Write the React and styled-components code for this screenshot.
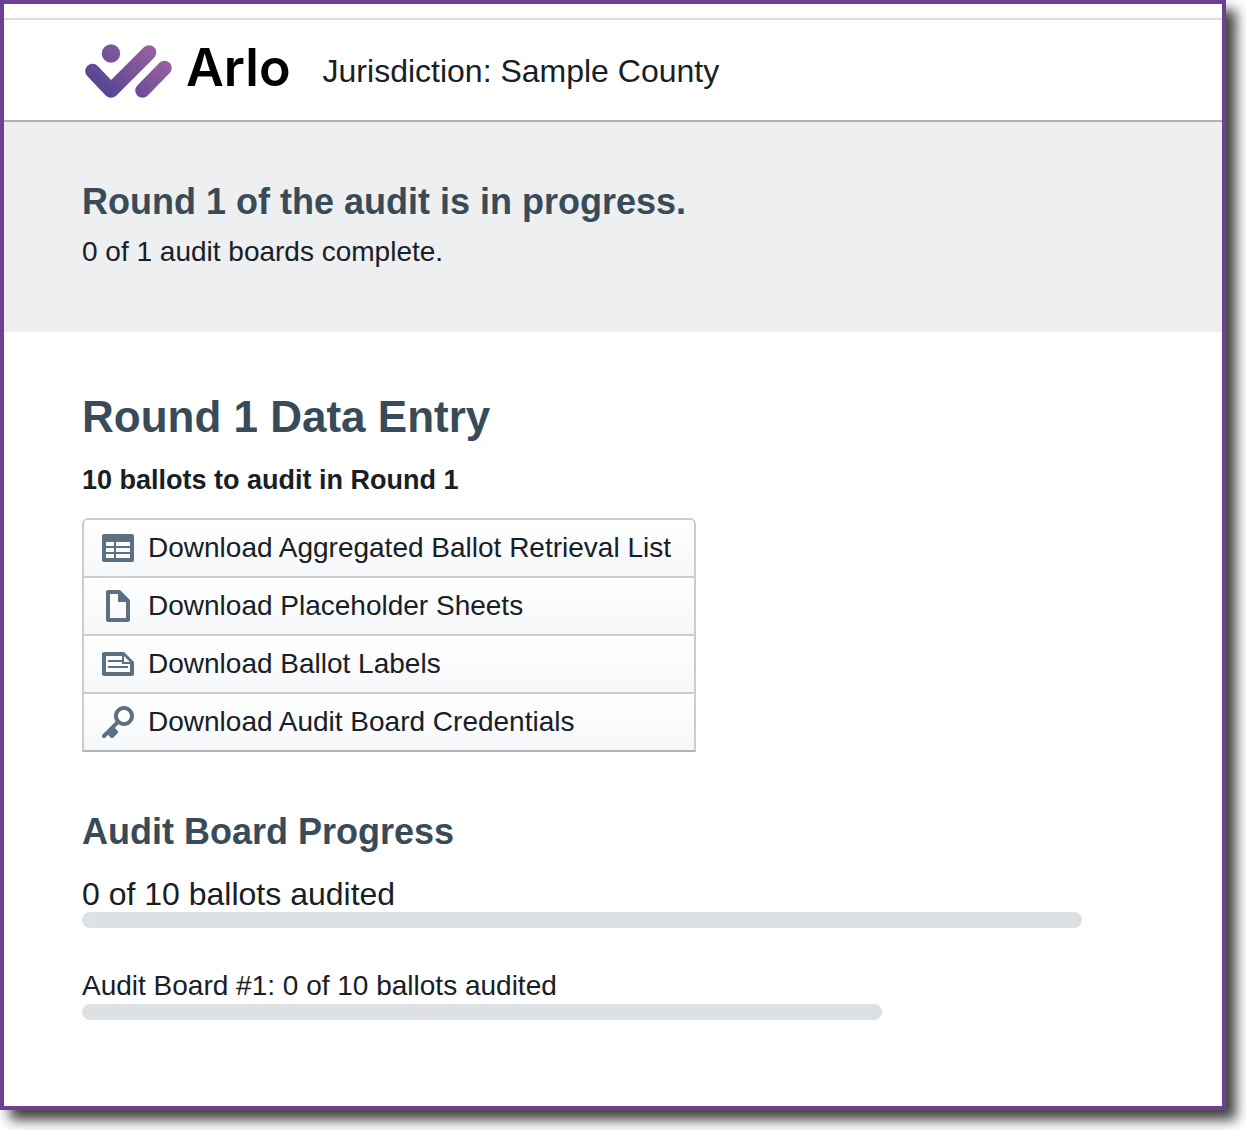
import React from "react";
import styled, { createGlobalStyle } from "styled-components";

const GlobalStyle = createGlobalStyle`
  *, *::before, *::after { box-sizing: border-box; }
  body {
    margin: 0;
    background: #fff;
    color: #182026;
    font-family: "Liberation Sans", Arial, Helvetica, sans-serif;
    font-size: 28px;
    line-height: 36px;
  }
`;

const Window = styled.div`
  display: flex;
  flex-direction: column;
  min-height: calc(100vh - 20px);
  margin: 0 20px 20px 0;
  border: 4px solid #6f3f94;
  background: #fff;
  box-shadow: 10px 10px 12px rgba(0, 0, 0, 0.75);
`;

const TopStrip = styled.div`
  height: 16px;
  border-bottom: 2px solid #dcdce2;
`;

const Header = styled.header`
  display: flex;
  align-items: center;
  gap: 32px;
  height: 102px;
  padding: 0 78px;
  border-bottom: 2px solid #adb2b7;
`;

const Brand = styled.a`
  display: flex;
  align-items: center;
  gap: 12px;
  color: #000;
  text-decoration: none;
`;

const BrandMark = styled.svg`
  width: 92px;
  height: 58px;
`;

const BrandName = styled.span`
  padding-bottom: 4px;
  font-family: Inter, sans-serif;
  font-size: 52px;
  font-weight: 600;
  line-height: 54px;
`;

const Jurisdiction = styled.span`
  padding-top: 2px;
  font-size: 32px;
`;

const Banner = styled.section`
  padding: 60px 78px 62px;
  background: #edeff1;
`;

const Main = styled.main`
  padding: 58px 78px 80px;
`;

const PageTitle = styled.h1`
  margin: 0;
  color: #394b59;
  font-size: 44px;
  line-height: 54px;
`;

const SectionTitle = styled.h2`
  margin: 0;
  color: #394b59;
  font-size: 36px;
  line-height: 40px;
`;

const Summary = styled.p`
  margin: 12px 0 0;
`;

const BallotCount = styled.p`
  margin: 18px 0 20px;
  font-size: 27px;
  font-weight: 600;
`;

const ButtonGroup = styled.div`
  display: inline-flex;
  flex-direction: column;
  margin-bottom: 60px;
  border: 2px solid #caccce;
  border-bottom-color: #afb5ba;
  border-radius: 6px 6px 0 0;
  overflow: hidden;
`;

const DownloadButton = styled.button`
  display: flex;
  align-items: center;
  gap: 14px;
  height: 58px;
  padding: 0 23px 0 18px;
  border: 0;
  border-bottom: 2px solid #caccce;
  background: linear-gradient(#fff, #f5f7f9);
  color: inherit;
  font: inherit;
  text-align: left;
  cursor: pointer;

  &:last-child {
    height: 56px;
    border-bottom: 0;
  }
`;

const Icon = styled.svg`
  flex: none;
  width: 32px;
  height: 32px;
  fill: #5c7080;
`;

const Progress = styled.div`
  width: ${(p) => (p.$large ? "1000px" : "800px")};
  max-width: 100%;
  margin-top: ${(p) => (p.$large ? "24px" : "40px")};
  font-size: ${(p) => (p.$large ? "32px" : "28px")};
`;

const Track = styled.div`
  height: 16px;
  border-radius: 8px;
  background: #dde1e4;
  overflow: hidden;
`;

const Fill = styled.div`
  height: 100%;
  background: #5c7080;
`;

const downloads = [
  {
    label: "Download Aggregated Ballot Retrieval List",
    path: "M15 1H1c-.6 0-1 .5-1 1v12c0 .6.4 1 1 1h14c.6 0 1-.4 1-1V2c0-.5-.4-1-1-1zM6 13H2v-2h4v2zm0-3H2V8h4v2zm0-3H2V5h4v2zm8 6H7v-2h7v2zm0-3H7V8h7v2zm0-3H7V5h7v2z",
  },
  {
    label: "Download Placeholder Sheets",
    path: "M9 0H3c-.55 0-1 .45-1 1v14c0 .55.45 1 1 1h10c.55 0 1-.45 1-1V5L9 0zm3 14H4V2h4v4h4v8z",
  },
  {
    label: "Download Ballot Labels",
    path: "M11 2H1c-.55 0-1 .45-1 1v10c0 .55.45 1 1 1h14c.55 0 1-.45 1-1V7l-5-5zm3 10H2V4h8v4h4v4zM11 7V4l3 3h-3zM3 6h7v1H3zM3 9h10v1H3z",
  },
  {
    label: "Download Audit Board Credentials",
    path: "M11 0C8.24 0 6 2.24 6 5c0 1.02.31 1.96.83 2.75L.29 14.29a1.003 1.003 0 001.42 1.42L3 14.41l1.29 1.29c.18.19.43.3.71.3s.53-.11.71-.29l2-2a.996.996 0 000-1.41L6.41 11l1.83-1.83c.8.52 1.74.83 2.76.83 2.76 0 5-2.24 5-5s-2.24-5-5-5zm0 8c-1.66 0-3-1.34-3-3s1.34-3 3-3 3 1.34 3 3-1.34 3-3 3z",
  },
];

function ProgressBar({ label, done, total, large }) {
  return (
    <Progress $large={large}>
      <div>{label}</div>
      <Track role="progressbar" aria-label={label} aria-valuenow={done} aria-valuemax={total}>
        <Fill style={{ width: `${(done / total) * 100}%` }} />
      </Track>
    </Progress>
  );
}

export default function App() {
  return (
    <>
      <GlobalStyle />
      <Window>
        <TopStrip />
        <Header>
          <Brand href="#">
            <BrandMark viewBox="0 0 92 58" aria-hidden="true">
              <defs>
                <linearGradient id="mark" gradientUnits="userSpaceOnUse" x1="22" y1="50" x2="62" y2="4">
                  <stop offset="0" stopColor="#564694" />
                  <stop offset="1" stopColor="#965f9f" />
                </linearGradient>
              </defs>
              <circle cx="29" cy="12.5" r="9.2" fill="url(#mark)" />
              <path
                d="M10.5 30L29 49.5L67 11.5M60.5 49.5L82.5 27"
                fill="none"
                stroke="url(#mark)"
                strokeWidth="14.6"
                strokeLinecap="round"
                strokeLinejoin="round"
              />
            </BrandMark>
            <BrandName>Arlo</BrandName>
          </Brand>
          <Jurisdiction>Jurisdiction: Sample County</Jurisdiction>
        </Header>
        <Banner>
          <SectionTitle>Round 1 of the audit is in progress.</SectionTitle>
          <Summary>0 of 1 audit boards complete.</Summary>
        </Banner>
        <Main>
          <PageTitle>Round 1 Data Entry</PageTitle>
          <BallotCount>10 ballots to audit in Round 1</BallotCount>
          <ButtonGroup>
            {downloads.map((d) => (
              <DownloadButton key={d.label} type="button">
                <Icon viewBox="0 0 16 16" aria-hidden="true">
                  <path fillRule="evenodd" d={d.path} />
                </Icon>
                {d.label}
              </DownloadButton>
            ))}
          </ButtonGroup>
          <SectionTitle>Audit Board Progress</SectionTitle>
          <ProgressBar large label="0 of 10 ballots audited" done={0} total={10} />
          <ProgressBar label="Audit Board #1: 0 of 10 ballots audited" done={0} total={10} />
        </Main>
      </Window>
    </>
  );
}
